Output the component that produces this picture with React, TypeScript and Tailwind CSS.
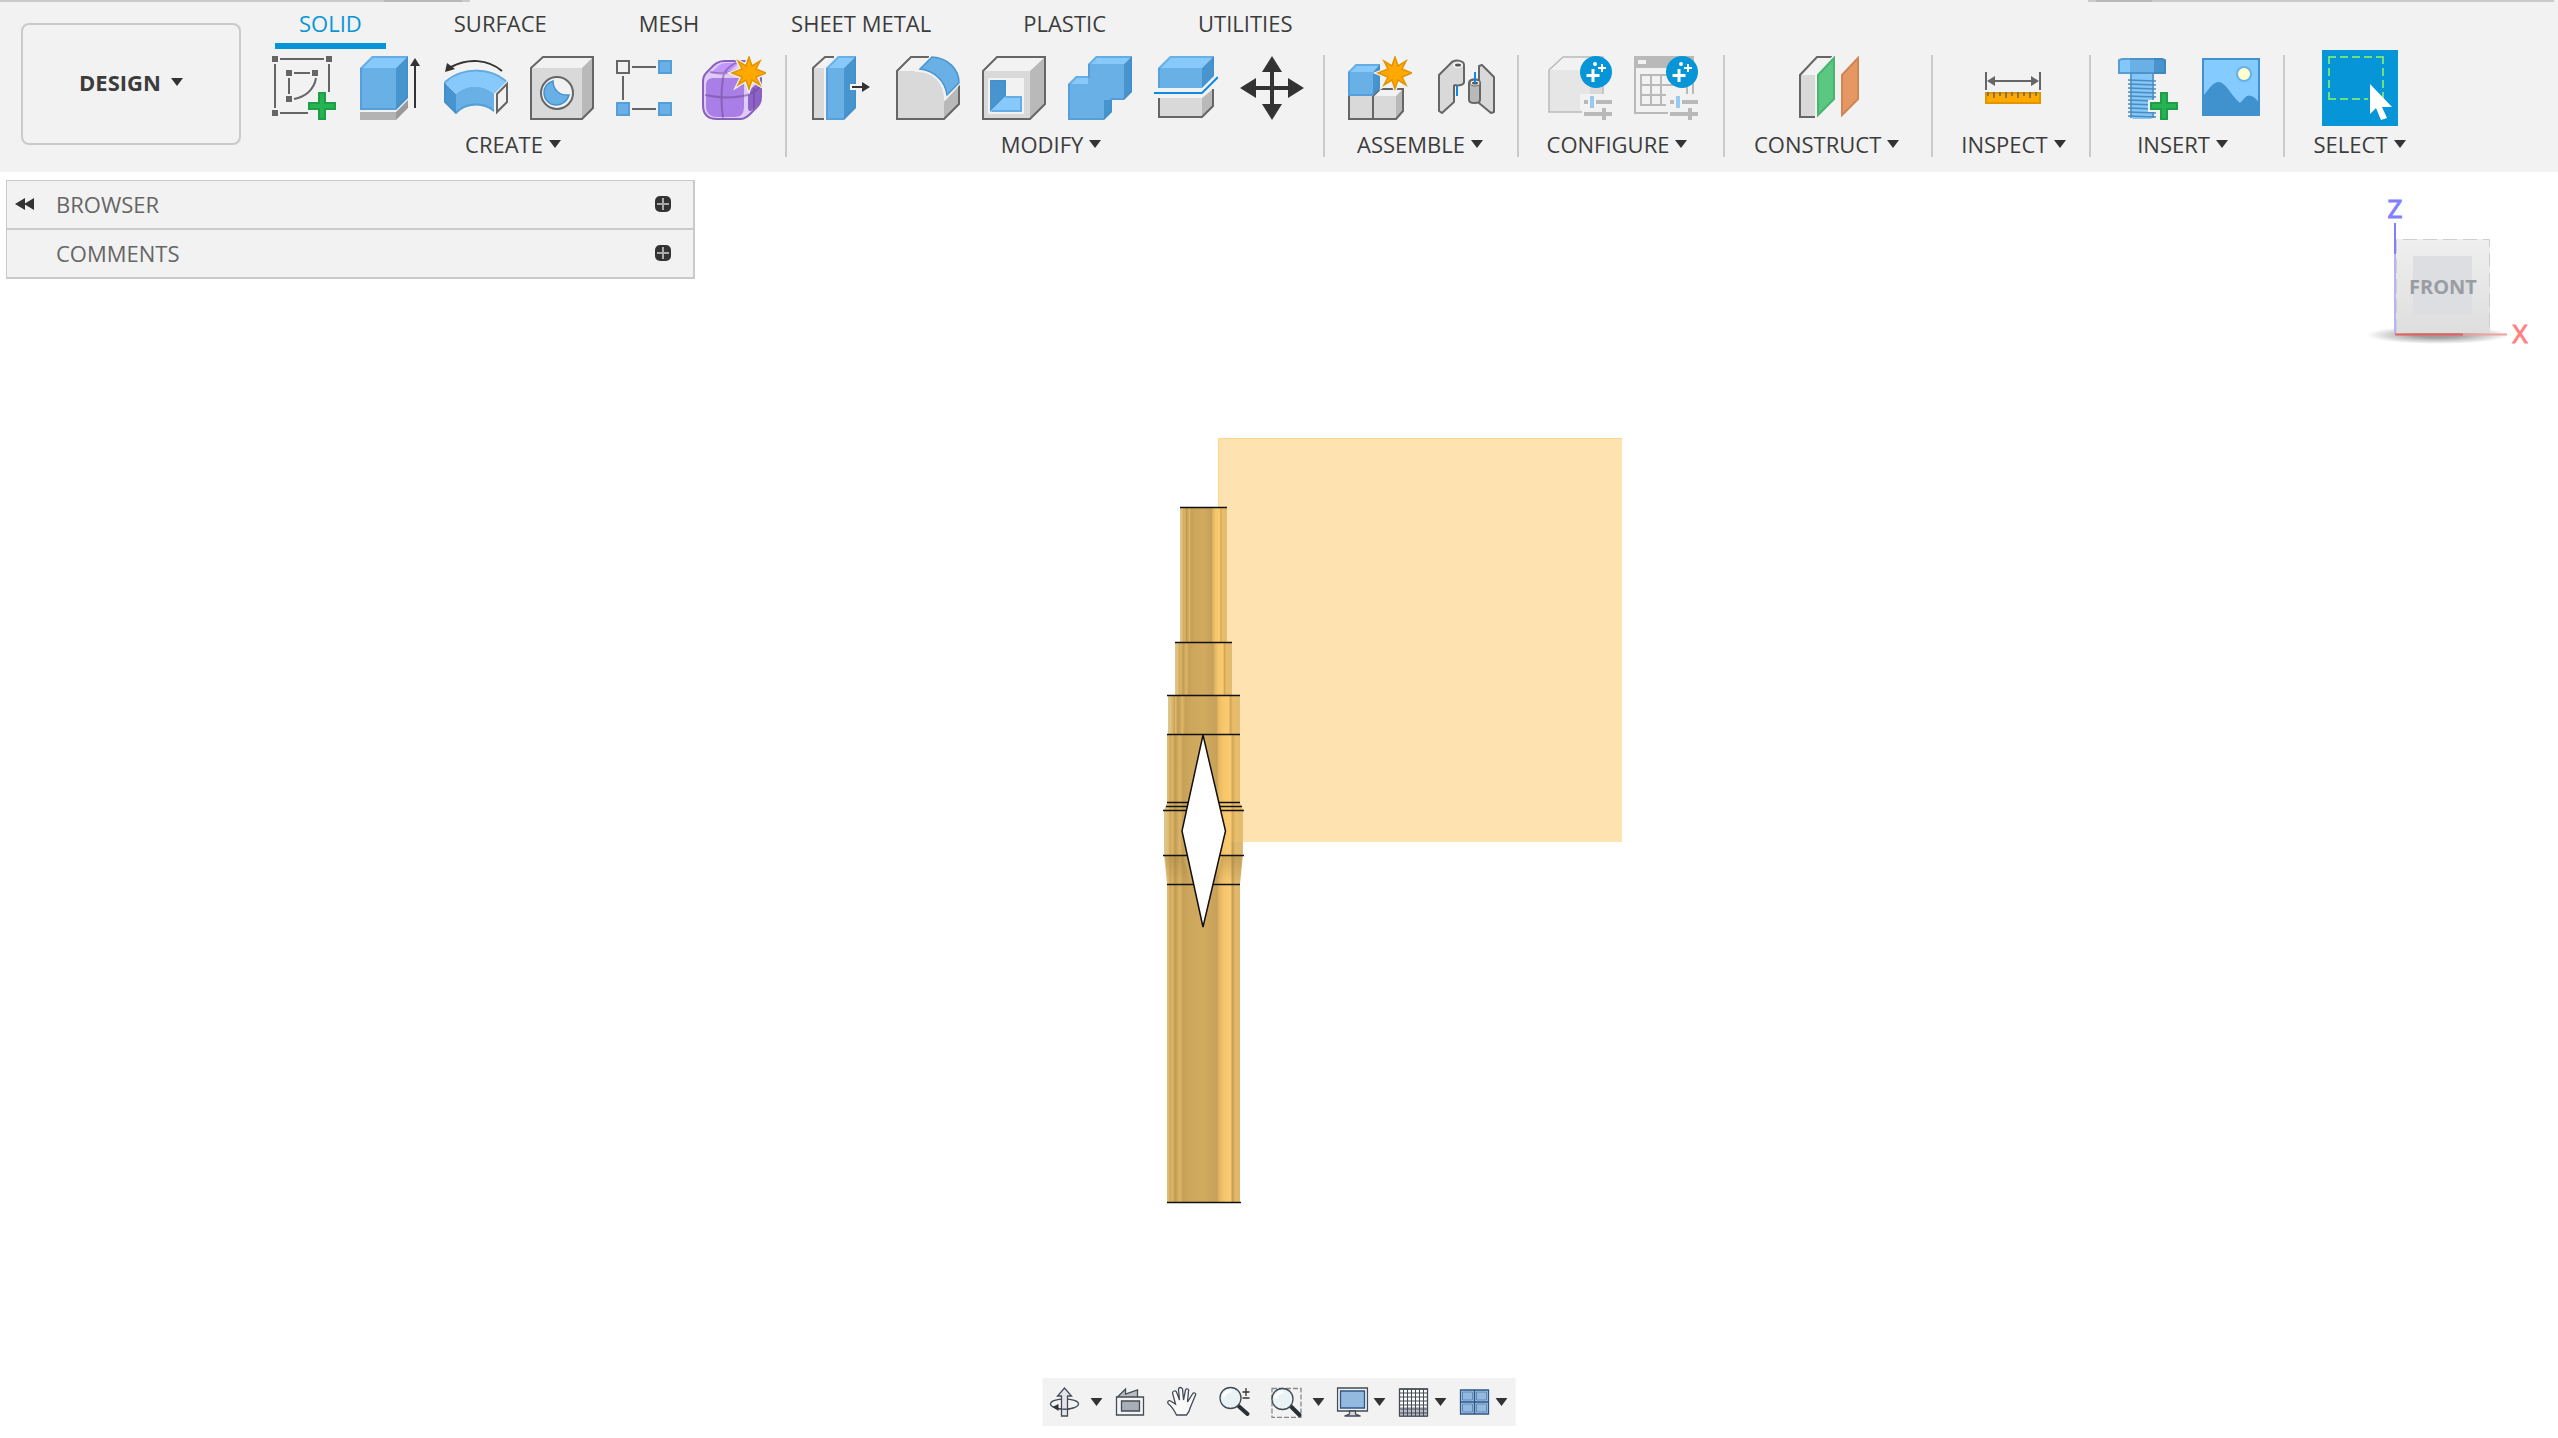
import type { ReactNode } from 'react';
import clsx from 'clsx';

// ─── Shared shapes ───────────────────────────────────────────────────────────

function Caret() {
  return (
    <svg width="12" height="8" viewBox="0 0 12 8" className="shrink-0">
      <path d="M0 0h12L6 8z" fill="#333" />
    </svg>
  );
}

function Icon({ children }: { children: ReactNode }) {
  return (
    <svg viewBox="0 0 64 64" className="size-16" fill="none">
      {children}
    </svg>
  );
}

const Plus = () => (
  <>
    <path d="M44 34h12v10h10v12H56v10H44V56H34V44h10z" fill="#f2f2f2" />
    <path d="M47 37h6v10h10v6H53v10h-6V53H37v-6h10z" fill="#27b354" stroke="#1c9f47" strokeWidth="2" />
  </>
);

const STAR = 'M47 1l3 9 8-5-4 8 10 4-10 4 4 8-8-5-3 9-3-9-8 5 4-8-10-4 10-4-4-8 8 5z';

const Star = () => (
  <>
    <path d={STAR} fill="#f2f2f2" stroke="#f2f2f2" strokeWidth="4" />
    <path d={STAR} fill="#ffa800" stroke="#e29500" strokeWidth="1.5" />
  </>
);

const ConfigBadge = () => (
  <>
    <path d="M32 38h32v26H34V54h-2z" fill="#f2f2f2" />
    <path d="M36 46h28M36 58h28M56 52v12" stroke="#b9b9b9" strokeWidth="4" />
    <path d="M44 38v16" stroke="#f2f2f2" strokeWidth="8" />
    <path d="M44 40v12" stroke="#97caf2" strokeWidth="4" />
    <circle cx="48" cy="16" r="16" fill="#0696d7" />
    <path d="M45 13v13M38.500 19.500h13" stroke="#fff" strokeWidth="3" />
    <path d="M54 8v8M50 12h8" stroke="#fff" strokeWidth="2" />
    <circle cx="47" cy="8" r="2" fill="#fff" />
  </>
);

// ─── Toolbar icons ───────────────────────────────────────────────────────────

const SketchIcon = () => (
  <Icon>
    <path d="M8 3h44M3 8v44M57 8v28M8 57h28M22 17h16M17 22v16M22 43C33 41 42 34 44 22" stroke="#666" strokeWidth="2" />
    <path d="M0 0h6v6H0zM54 0h6v6h-6zM0 54h6v6H0zM14 14h6v6h-6zM40 14h6v6h-6zM14 40h6v6h-6z" fill="#666" />
    <Plus />
  </Icon>
);

const ExtrudeIcon = () => (
  <Icon>
    <path d="M2 56h36v8H2z" fill="#b3b3b3" />
    <path d="M38 56l12-12v8L38 64z" fill="#999" />
    <path d="M2 12h36v42H2z" fill="#69b0e7" />
    <path d="M2 12L14 0h36L38 12z" fill="#87c9fb" />
    <path d="M38 12L50 0v42L38 54z" fill="#4894cf" />
    <path d="M3 12.500L14.500 1H49v40.500L37.500 53H3z" stroke="#3c8cc8" strokeOpacity=".45" strokeWidth="2" />
    <path d="M57 52V8" stroke="#333" strokeWidth="2" />
    <path d="M57 2l5 8H52z" fill="#333" />
  </Icon>
);

const RevolveIcon = () => (
  <Icon>
    <path d="M0 26l12 12v20L0 46z" fill="#4894cf" />
    <path d="M0 26C18 10 45 10 63 25L50 38c-10-10-28-10-38 0z" fill="#87c9fb" />
    <path d="M12 38c10-10 28-10 38 0v18c-10-9-28-9-38 2z" fill="#69b0e7" />
    <path d="M1 26C18 11 45 11 62 25M50 55c-10-9-28-9-38 2L1 46V26" stroke="#3c8cc8" strokeOpacity=".5" strokeWidth="2" />
    <path d="M53 38l10-10v18L53 56z" fill="#f2f2f2" stroke="#666" strokeWidth="2" />
    <path d="M58 15C44 3 24 2 7 11" stroke="#333" strokeWidth="2" />
    <path d="M1 16L3 7l8 6z" fill="#333" />
  </Icon>
);

const HoleIcon = () => (
  <Icon>
    <path d="M1 12L13 1h50L52 12z" fill="#f2f2f2" />
    <path d="M1 12h51v51H1z" fill="#d9d9d9" />
    <path d="M52 12L63 1v51L52 63z" fill="#b9b9b9" />
    <path d="M1 12L13 1h50v51L52 63H1z" stroke="#666" strokeWidth="2" />
    <circle cx="27" cy="37" r="16" fill="#f2f2f2" stroke="#666" strokeWidth="2" />
    <path d="M23 25c0 9 7 15 16 14-2 7-8 10-13 10-7 0-12-6-12-12 0-5 3-10 9-12z" fill="#69b0e7" stroke="#4894cf" strokeWidth="1.500" />
  </Icon>
);

const PatternIcon = () => (
  <Icon>
    <path d="M16 11h24M7 20v24M16 53h24" stroke="#666" strokeWidth="2" />
    <path d="M1 5h12v12H1z" fill="#f2f2f2" stroke="#666" strokeWidth="2" />
    <path d="M43 5h12v12H43zM1 47h12v12H1zM43 47h12v12H43z" fill="#69b0e7" stroke="#559fd8" strokeWidth="2" />
  </Icon>
);

const FormIcon = () => (
  <Icon>
    <path d="M1 25c0-5 2-7 6-11s8-9 15-9h18c12 0 19 8 19 18v18c0 6-2 8-6 12s-8 10-14 10H15C6 63 1 58 1 49z" fill="#e0caf8" />
    <path d="M9 17l6-6c3-3 6-4 9-4h13l-9 8c-4 3-7 2-19 2z" fill="#c097fb" />
    <path d="M4 30c0-7 4-8 8-8h24c5 0 6 3 6 8v20c0 8-3 11-10 11H15C8 61 4 57 4 50z" fill="#a97ee6" />
    <path d="M46 39c0-4 3-6 6-9l7-6v17c0 5-3 8-7 12-4 3-6 3-6-2z" fill="#8e63c9" />
    <path d="M3 39c14 3 28 3 38 1 7-1 13-5 18-10M21 62c-2-14-2-27 0-40 1-8 7-12 14-16M8 16c8 2 18 2 26-2M52 54V32" stroke="#6b4594" strokeOpacity=".5" strokeWidth="2" />
    <path d="M1 25c0-5 2-7 6-11s8-9 15-9h18c12 0 19 8 19 18v18c0 6-2 8-6 12s-8 10-14 10H15C6 63 1 58 1 49z" stroke="#8a60bf" strokeWidth="2" />
    <Star />
  </Icon>
);

const PressPullIcon = () => (
  <Icon>
    <path d="M3 13L15 1h9L14 12v51H3z" fill="#d9d9d9" />
    <path d="M3 12L15 1h9L14 12z" fill="#f2f2f2" />
    <path d="M24 1h-9L3 12v51h11" stroke="#666" strokeWidth="2" />
    <path d="M16 12h18v52H16z" fill="#69b0e7" />
    <path d="M16 12L28 0h18L34 12z" fill="#87c9fb" />
    <path d="M34 12L46 0v52L34 64z" fill="#4894cf" />
    <path d="M17 12.500L28.500 1H45v50.500L33.500 63H17z" stroke="#3c8cc8" strokeOpacity=".4" strokeWidth="2" />
    <path d="M40 31h14" stroke="#f2f2f2" strokeWidth="6" />
    <path d="M42 31h12" stroke="#333" strokeWidth="2" />
    <path d="M52 26l8 5-8 5z" fill="#333" />
  </Icon>
);

const FilletIcon = () => (
  <Icon>
    <path d="M1 15L15 1h19L22 15z" fill="#f2f2f2" />
    <path d="M1 15h22c14 1 25 12 25 28v20H1z" fill="#d9d9d9" />
    <path d="M48 44l15-15v19L48 63z" fill="#b9b9b9" />
    <path d="M33 1H15L1 15v48h47l15-15V29" stroke="#666" strokeWidth="2" />
    <path d="M23 14L36 1c16 1 27 12 27 26L50 41C49 25 38 15 23 14z" fill="#69b0e7" stroke="#f2f2f2" strokeWidth="4" />
    <path d="M24 13L36 1c16 1 27 12 27 26L51 39C49 25 39 15 24 13z" fill="#69b0e7" stroke="#4894cf" strokeWidth="1.500" />
  </Icon>
);

const ShellIcon = () => (
  <Icon>
    <path d="M1 15L15 1h48L48 15z" fill="#f2f2f2" />
    <path d="M1 15h47v48H1z" fill="#d9d9d9" />
    <path d="M48 15L63 1v47L48 63z" fill="#b9b9b9" />
    <path d="M1 15L15 1h48v47L48 63H1z" stroke="#666" strokeWidth="2" />
    <path d="M6 22h36v36H6z" fill="#f2f2f2" />
    <path d="M8 24h16v16L8 56z" fill="#4894cf" />
    <path d="M8 56l16-16h16v16z" fill="#87c9fb" />
    <path d="M9 25h14v15M23 41h16v14H10" stroke="#3c8cc8" strokeOpacity=".45" strokeWidth="2" />
  </Icon>
);

const CombineIcon = () => (
  <Icon>
    <path d="M0 28h20V8h36v36H36v20H0z" fill="#69b0e7" />
    <path d="M0 28l8-8h12v8zM20 8l8-8h36l-8 8z" fill="#87c9fb" />
    <path d="M56 8l8-8v36l-8 8zM36 44h8v12l-8 8z" fill="#4894cf" />
    <path d="M1 28.500L8.500 21H21V8.500L28.500 1H63v34.500L55.500 43H43v12.500L35.500 63H1z" stroke="#3c8cc8" strokeOpacity=".45" strokeWidth="2" />
  </Icon>
);

const SplitIcon = () => (
  <Icon>
    <path d="M4 12h44v20H4z" fill="#69b0e7" />
    <path d="M4 12L16 0h44L48 12z" fill="#87c9fb" />
    <path d="M48 12L60 0v20L48 32z" fill="#4894cf" />
    <path d="M5 32V12.500L16.500 1H59v19" stroke="#3c8cc8" strokeOpacity=".4" strokeWidth="2" />
    <path d="M0 37h48l16-16" stroke="#0d8ae5" strokeWidth="2" />
    <path d="M5 42h43v19H5z" fill="#d9d9d9" />
    <path d="M48 42l11-9v17L48 61z" fill="#b9b9b9" />
    <path d="M5 42v19h43l11-11V33" stroke="#666" strokeWidth="2" />
  </Icon>
);

const MoveIcon = () => (
  <Icon>
    <path d="M32 12v40M12 32h40" stroke="#333" strokeWidth="4" />
    <path d="M32 0l10 16H22zM32 64l10-16H22zM0 32l16-10v20zM64 32L48 22v20z" fill="#333" />
  </Icon>
);

const ComponentIcon = () => (
  <Icon>
    <path d="M1 40h24v23H1zM25 40h23v23H25z" fill="#d9d9d9" />
    <path d="M25 40l7-7h23l-7 7z" fill="#f2f2f2" />
    <path d="M48 40l7-7v22l-7 8z" fill="#b9b9b9" />
    <path d="M1 40v23h47l7-8V33H32l-7 7v23" stroke="#666" strokeWidth="2" />
    <path d="M0 16h25v24H0z" fill="#69b0e7" />
    <path d="M0 16l8-8h24l-7 8z" fill="#87c9fb" />
    <path d="M25 16l7-8v24l-7 8z" fill="#4894cf" />
    <path d="M1 16l7-7h23v22l-7 8H1z" stroke="#3c8cc8" strokeOpacity=".45" strokeWidth="2" />
    <Star />
  </Icon>
);

const JointIcon = () => (
  <Icon>
    <path d="M5 19L18 6l2 4v36L8 57l-3-2z" fill="#d9d9d9" stroke="#666" strokeWidth="2" strokeLinejoin="round" />
    <path d="M18 8v20c3 3 12 2 12-2V9c0-5-9-6-12-3z" fill="#d9d9d9" />
    <path d="M17 7c3-4 13-3 13 2v17c0 3-5 4-10 3" stroke="#666" strokeWidth="2" />
    <ellipse cx="24" cy="9" rx="5" ry="3" fill="#f2f2f2" />
    <ellipse cx="24" cy="9" rx="3" ry="1.500" fill="#555" />
    <path d="M23 30v10" stroke="#0d8ae5" strokeWidth="2" />
    <path d="M45 10l3-1 12 12v35l-3 1-12-10z" fill="#d9d9d9" stroke="#666" strokeWidth="2" strokeLinejoin="round" />
    <path d="M35 27c0-5 11-5 11 0v17c0 4-11 4-11 0z" fill="#b9b9b9" stroke="#666" strokeWidth="2" />
    <ellipse cx="41" cy="27" rx="5" ry="3" fill="#f2f2f2" stroke="#666" strokeWidth="1" />
    <ellipse cx="41" cy="27" rx="3" ry="1.500" fill="#555" />
    <path d="M41 16v11" stroke="#0d8ae5" strokeWidth="2" />
  </Icon>
);

const ConfigureIcon = () => (
  <Icon>
    <path d="M1 14h41v42H1z" fill="#e6e6e6" />
    <path d="M42 14L55 1v42L42 56z" fill="#d9d9d9" />
    <path d="M1 14L15 1h40v42L42 56H1z" stroke="#bbb" strokeWidth="1.500" />
    <ConfigBadge />
  </Icon>
);

const ConfigTableIcon = () => (
  <Icon>
    <path d="M0 0h60v12H0z" fill="#b9b9b9" />
    <path d="M4 4h8v4H4z" fill="#f2f2f2" />
    <path d="M1 12v45h36M59 12v30M53 30v12M7 19h46v30H7zM17 19v30M27 19v30M7 29h46M7 39h46" stroke="#b9b9b9" strokeWidth="2" />
    <ConfigBadge />
  </Icon>
);

const PlaneIcon = () => (
  <Icon>
    <path d="M5 19L22 1h15L20 19z" fill="#f2f2f2" />
    <path d="M5 19h15v42H5z" fill="#d9d9d9" />
    <path d="M37 1H22L5 19v42h15" stroke="#666" strokeWidth="2" />
    <path d="M23 19L39 2v41L23 59z" fill="#5ac880" stroke="#f2f2f2" strokeWidth="5" />
    <path d="M23 19L39 2v41L23 59z" fill="#5ac880" stroke="#48b46e" strokeWidth="2" />
    <path d="M47 19L63 2v41L47 59z" fill="#e59864" stroke="#d08552" strokeWidth="2" />
  </Icon>
);

const MeasureIcon = () => (
  <Icon>
    <path d="M5 16v18M59 16v18M10 25h44" stroke="#666" strokeWidth="2" />
    <path d="M6 25l8-5v10zM58 25l-8-5v10z" fill="#666" />
    <path d="M5 37h54v10H5z" fill="#ffa800" stroke="#e09600" strokeWidth="2" />
    <path d="M7 36v4M13 36v6M19 36v4M25 36v6M31 36v4M37 36v6M43 36v4M49 36v6M55 36v4" stroke="#666" strokeWidth="1.500" />
  </Icon>
);

const FastenerIcon = () => (
  <Icon>
    <path d="M16 18h24v42l-3 3H19l-3-3z" fill="#84c7fa" />
    <path d="M17 18v44M39 18v44" stroke="#5a9dcf" strokeWidth="2" />
    <path d="M4 4l4-2h8v16H4z" fill="#84c7fa" />
    <path d="M16 2h24v16H16z" fill="#69b0e7" />
    <path d="M40 2h8l4 2v14H40z" fill="#4894cf" />
    <path d="M5 17V4l3-1h40l3 1v13z" stroke="#3c7fb3" strokeOpacity=".6" strokeWidth="2" />
    <path d="M14 24l28 1M14 28l28 1M14 32l28 1M14 36l28 1M14 40l28 1M14 44l28 1M14 48l28 1M14 52l28 1M14 56l28 1M14 60l28 1" stroke="#4c8bbd" strokeWidth="1.500" />
    <Plus />
  </Icon>
);

const CanvasIcon = () => (
  <Icon>
    <path d="M2 2h58v58H2z" fill="#84cbff" />
    <path d="M2 42C12 28 16 24 22 27c6 4 10 13 18 20 5-5 7-9 11-7 4 1 6 4 9 8v12H2z" fill="#3f92cd" />
    <path d="M3 3h56v56H3z" stroke="#3f92cd" strokeWidth="2" />
    <circle cx="44" cy="18" r="7" fill="#ffffcd" stroke="#69b0e7" strokeWidth="2" />
  </Icon>
);

const SelectIcon = () => (
  <Icon>
    <path d="M1 8V1h7M12 1h8M24 1h8M36 1h8M48 1h7v7M55 12v8M55 24v8M55 36v7M40 43h-4M32 43h-8M20 43h-8M8 43H1v-7M1 32v-8M1 20v-8" stroke="#6fe07f" strokeWidth="2" />
    <path d="M42 28v30l6-6 5 12 6-2-5-11h10z" fill="#fff" />
  </Icon>
);

// ─── Ribbon ──────────────────────────────────────────────────────────────────

const TABS = ['SOLID', 'SURFACE', 'MESH', 'SHEET METAL', 'PLASTIC', 'UTILITIES'];

type Tool = { name: string; icon: ReactNode; active?: boolean };

type Group = { label: string; pad: string; labelPad?: string; tools: Tool[] };

const GROUPS: Group[] = [
  {
    label: 'CREATE',
    pad: 'pr-[13px]',
    labelPad: 'pr-3',
    tools: [
      { name: 'Create Sketch', icon: <SketchIcon /> },
      { name: 'Extrude', icon: <ExtrudeIcon /> },
      { name: 'Revolve', icon: <RevolveIcon /> },
      { name: 'Hole', icon: <HoleIcon /> },
      { name: 'Rectangular Pattern', icon: <PatternIcon /> },
      { name: 'Create Form', icon: <FormIcon /> },
    ],
  },
  {
    label: 'MODIFY',
    pad: 'pl-[17px] pr-[13px]',
    labelPad: 'pr-3',
    tools: [
      { name: 'Press Pull', icon: <PressPullIcon /> },
      { name: 'Fillet', icon: <FilletIcon /> },
      { name: 'Shell', icon: <ShellIcon /> },
      { name: 'Combine', icon: <CombineIcon /> },
      { name: 'Split Body', icon: <SplitIcon /> },
      { name: 'Move/Copy', icon: <MoveIcon /> },
    ],
  },
  {
    label: 'ASSEMBLE',
    pad: 'pl-[17px] pr-[13px]',
    labelPad: 'pr-[6px]',
    tools: [
      { name: 'New Component', icon: <ComponentIcon /> },
      { name: 'Joint', icon: <JointIcon /> },
    ],
  },
  {
    label: 'CONFIGURE',
    pad: 'pl-[23px] pr-[19px]',
    labelPad: 'pr-3',
    tools: [
      { name: 'Create Configuration', icon: <ConfigureIcon /> },
      { name: 'Configuration Table', icon: <ConfigTableIcon /> },
    ],
  },
  { label: 'CONSTRUCT', pad: 'pl-[29px] pr-8', tools: [{ name: 'Offset Plane', icon: <PlaneIcon /> }] },
  { label: 'INSPECT', pad: 'pl-7 pr-[23px]', tools: [{ name: 'Measure', icon: <MeasureIcon /> }] },
  {
    label: 'INSERT',
    pad: 'pl-[17px] pr-[13px]',
    labelPad: 'pr-3',
    tools: [
      { name: 'Insert Fastener', icon: <FastenerIcon /> },
      { name: 'Canvas', icon: <CanvasIcon /> },
    ],
  },
  { label: 'SELECT', pad: 'pl-[29px] pr-7', tools: [{ name: 'Select', icon: <SelectIcon />, active: true }] },
];

function ToolGroup({ label, pad, labelPad, tools }: Group) {
  return (
    <div className={clsx('flex flex-col items-center', pad)}>
      <div className="flex gap-[10px]">
        {tools.map((tool) => (
          <button
            key={tool.name}
            aria-label={tool.name}
            className={clsx('size-[76px] p-[6px]', tool.active && 'bg-[#0696d7]')}
          >
            {tool.icon}
          </button>
        ))}
      </div>
      <button className={clsx('mt-[6px] flex items-center gap-[6px]', labelPad)}>
        {label}
        <Caret />
      </button>
    </div>
  );
}

function Ribbon() {
  return (
    <header className="bg-[#f2f2f2] text-[22px] leading-6 text-[#3c3c3c]">
      <div className="flex h-[2px] justify-between pr-1">
        <div className="flex w-[470px] justify-end bg-[#cacaca] pr-2">
          <div className="w-[78px] bg-[#b9b9b9]" />
        </div>
        <div className="flex w-[466px] bg-[#cacaca] pl-2">
          <div className="w-14 bg-[#b9b9b9]" />
        </div>
      </div>
      <div className="flex items-start pl-[21px]">
        <button className="mt-[21px] flex h-[122px] w-[220px] items-center justify-center gap-[10px] rounded-lg border-2 border-[#cacaca] pb-1 font-bold">
          DESIGN
          <Caret />
        </button>
        <div className="ml-[25px] pt-[9px] pb-[15px]">
          <nav className="mb-px ml-[9px] flex gap-11">
            {TABS.map((tab, i) => (
              <button
                key={tab}
                className={clsx(
                  'border-b-[6px] px-6 pb-2',
                  i === 0 ? 'border-[#0696d7] text-[#0696d7]' : 'border-transparent',
                )}
              >
                {tab}
              </button>
            ))}
          </nav>
          <div className="flex">
            {GROUPS.map((group, i) => (
              <div key={group.label} className="flex">
                {i > 0 && <div className="mt-[5px] h-[102px] w-[2px] bg-[#cacaca]" />}
                <ToolGroup {...group} />
              </div>
            ))}
          </div>
        </div>
      </div>
    </header>
  );
}

// ─── Side panels ─────────────────────────────────────────────────────────────

function PanelRow({ title, collapsible }: { title: string; collapsible?: boolean }) {
  return (
    <div className="flex h-[49px] items-center border-b-2 border-[#cacaca] pr-[22px] pb-[2px] pl-2">
      <button aria-label="Collapse panel" className="h-3 w-5">
        {collapsible && (
          <svg viewBox="0 0 20 12" className="h-3 w-5">
            <path d="M0 6L10 0v12zM9 6l10-6v12z" fill="#333" />
          </svg>
        )}
      </button>
      <h2 className="ml-[21px] flex-1">{title}</h2>
      <button aria-label={`Add to ${title}`}>
        <svg viewBox="0 0 16 16" className="size-4">
          <rect width="16" height="16" rx="5" fill="#333" />
          <path d="M8 2v12M2 8h12" stroke="#aaa" strokeWidth="2" />
        </svg>
      </button>
    </div>
  );
}

// ─── Canvas ──────────────────────────────────────────────────────────────────

function Model() {
  return (
    <svg
      width="470"
      height="780"
      viewBox="1160 430 470 780"
      className="absolute top-[258px] left-1/2 -ml-[119px]"
      fill="none"
    >
      <defs>
        <linearGradient id="brass">
          <stop offset="0" stopColor="#d9c89b" />
          <stop offset=".05" stopColor="#e3bd6e" />
          <stop offset=".09" stopColor="#c9a55c" />
          <stop offset=".1" stopColor="#e3bb69" />
          <stop offset=".14" stopColor="#bd9a55" />
          <stop offset=".2" stopColor="#dfb566" />
          <stop offset=".24" stopColor="#c6a057" />
          <stop offset=".32" stopColor="#cda75c" />
          <stop offset=".5" stopColor="#d2aa5f" />
          <stop offset=".67" stopColor="#c7a15a" />
          <stop offset=".7" stopColor="#e2b663" />
          <stop offset=".76" stopColor="#f6c66c" />
          <stop offset=".84" stopColor="#fbcb74" />
          <stop offset=".87" stopColor="#c09c54" />
          <stop offset=".9" stopColor="#e2ba6b" />
          <stop offset=".96" stopColor="#deb769" />
          <stop offset="1" stopColor="#d3bc88" />
        </linearGradient>
        <linearGradient id="taper" x1="0" y1="0" x2="0" y2="1">
          <stop offset="0" stopColor="#8f7136" stopOpacity=".35" />
          <stop offset="1" stopColor="#8f7136" stopOpacity="0" />
        </linearGradient>
      </defs>
      <path d="M1218 438h404v404h-404z" fill="#fee2b0" />
      <path d="M1218.500 842V438.500H1622" stroke="#ffd68c" />

      <g fill="url(#brass)">
        <path d="M1180 507h47v135h-47z" />
        <path d="M1175 642h57v53h-57z" />
        <path d="M1168 695h72v39h-72z" />
        <path d="M1167 734h73v69l3 7v45l-3 29v318h-73V884l-3-29v-45l3-7z" />
      </g>
      <path d="M1165 856h18l7 28h-22zM1242 856h-20l-7 28h25z" fill="url(#taper)" />
      <path d="M1218 507h9v135h5v53h8v108l3 7v32h-25z" fill="#ffc865" fillOpacity=".25" />

      <path
        d="M1180 507.500h47M1175 642.500h57M1167 695.500h73M1167 734.500h73M1167 802.500h73M1166 806.500h76M1163 810.500h81M1163 855.500h81M1167 884.500h73M1167 1202.500h74"
        stroke="#111"
        strokeWidth="1.500"
      />
      <path d="M1203 735l22.500 96-22.500 96-21-96z" fill="#fff" stroke="#111" strokeWidth="1.500" />
    </svg>
  );
}

function ViewCube() {
  return (
    <svg
      width="190"
      height="160"
      viewBox="2360 190 190 160"
      className="absolute top-[18px] right-2"
      fontFamily="'Open Sans', sans-serif"
    >
      <defs>
        <linearGradient id="cube" x1="0" y1="0" x2="0" y2="1">
          <stop offset="0" stopColor="#efefef" />
          <stop offset="1" stopColor="#dedede" />
        </linearGradient>
        <radialGradient id="shade">
          <stop offset=".3" stopColor="#777" stopOpacity=".7" />
          <stop offset="1" stopColor="#777" stopOpacity="0" />
        </radialGradient>
      </defs>
      <ellipse cx="2438" cy="335" rx="72" ry="9" fill="url(#shade)" />
      <path d="M2396 239h94v94h-94z" fill="url(#cube)" />
      <path d="M2396.500 333V239.500h93V333" fill="none" stroke="#cfcfcf" strokeDasharray="14 6" />
      <path d="M2413 256h59v59h-59z" fill="#dcdee2" />
      <path d="M2395 223v31" stroke="#8080ff" strokeWidth="2" />
      <path d="M2395 254v80" stroke="#b5b5f7" strokeWidth="2" />
      <path d="M2395 334.500h68" stroke="#e85f5f" strokeWidth="2" />
      <path d="M2463 334.500h44" stroke="#eda0a0" strokeWidth="2" />
      <text x="2443" y="294" textAnchor="middle" fontSize="20" fontWeight="700" fill="#999da2">
        FRONT
      </text>
      <text x="2395" y="218" textAnchor="middle" fontSize="26" fill="#8080ff" stroke="#8080ff">
        Z
      </text>
      <text x="2520" y="343" textAnchor="middle" fontSize="26" fill="#ff8080" stroke="#ff8080">
        X
      </text>
    </svg>
  );
}

// ─── Navigation bar ──────────────────────────────────────────────────────────

function NavIcon({ label, className, children }: { label: string; className?: string; children: ReactNode }) {
  return (
    <button aria-label={label} className={clsx('size-8', className)}>
      <svg viewBox="0 0 32 32" className="size-8" fill="none" stroke="#444b55" strokeWidth="1.300">
        {children}
      </svg>
    </button>
  );
}

function NavCaret({ className }: { className: string }) {
  return (
    <button aria-label="More options" className={className}>
      <Caret />
    </button>
  );
}

function NavBar() {
  return (
    <div className="absolute bottom-3 left-1/2 flex h-12 -translate-x-1/2 items-center bg-[#f2f2f2] pr-2 pl-[6px]">
      <NavIcon label="Orbit">
        <ellipse cx="16" cy="18" rx="14" ry="5" />
        <path d="M13 30V10h-4l7-8 7 8h-4v20z" fill="#e3e5ea" />
        <path d="M8 22c5 1.500 12 1.500 17 0" />
        <path d="M4 21l6-3v7z" fill="#333" stroke="none" />
      </NavIcon>
      <NavCaret className="ml-[10px]" />
      <NavIcon label="Look At" className="ml-3">
        <path d="M3 11l8-8v5l12-4v7" fill="#b9bcc2" />
        <path d="M2 11h27v18H2z" fill="#f4f4f6" />
        <path d="M7 15h18v10H7z" fill="#a9adb8" />
      </NavIcon>
      <NavIcon label="Pan" className="ml-5">
        <path
          d="M10 29c-2-4-4-8-8-11-2-2 0-4 2-3l5 3L6 7c0-2 3-3 4-1l3 8-1-11c0-2 3-2 4 0l1 11 2-10c1-2 4-1 3 1l-1 11 5-8c1-2 4-1 3 1l-5 12c-1 4-2 6-4 8z"
          fill="#fafafa"
        />
      </NavIcon>
      <NavIcon label="Zoom" className="ml-5">
        <path d="M20 20l9 8" stroke="#2b2f36" strokeWidth="4" strokeLinecap="round" />
        <circle cx="12" cy="12" r="10.500" fill="#e9f3f5" />
        <path d="M5 11c1-4 4-6 8-6" stroke="#fff" strokeWidth="3" />
        <path d="M24 6h7M27.500 2v8M24 12h7" stroke="#333" />
      </NavIcon>
      <NavIcon label="Fit" className="ml-5">
        <path d="M1.500 2.500h29v29h-29z" stroke="#888" strokeDasharray="5 2" />
        <path d="M20 20l9 9" stroke="#2b2f36" strokeWidth="4" strokeLinecap="round" />
        <circle cx="12" cy="13" r="10.500" fill="#e9f3f5" />
        <path d="M5 12c1-4 4-6 8-6" stroke="#fff" strokeWidth="3" />
      </NavIcon>
      <NavCaret className="ml-[10px]" />
      <NavIcon label="Display Settings" className="ml-3">
        <path d="M1 2h30v23H1z" fill="#f1f1f3" />
        <path d="M4 5h24v17H4z" fill="#94b9df" stroke="#2f5686" />
        <path d="M13 25h6v3l5 2H8l5-2z" fill="#d5d8de" />
      </NavIcon>
      <NavCaret className="ml-[5px]" />
      <NavIcon label="Grid and Snaps" className="ml-3">
        <path d="M2 3h28v27H2z" fill="#fff" />
        <path d="M2 21h28v9H2z" fill="#b9bcc6" stroke="none" />
        <path d="M2 3h28v27H2zM6 3v27M10 3v27M14 3v27M18 3v27M22 3v27M26 3v27M2 7h28M2 11h28M2 15h28M2 19h28M2 23h28M2 27h28" strokeWidth="1" />
      </NavIcon>
      <NavCaret className="ml-[5px]" />
      <NavIcon label="Viewports" className="ml-3">
        <path d="M2 4h28v24H2z" fill="#a9c7e8" stroke="#2f5686" />
        <path d="M4 6h10v8H4zM18 6h10v8H18zM4 18h10v8H4zM18 18h10v8H18z" fill="#94b9df" stroke="#5f89b8" strokeWidth="1" />
        <path d="M16 4v24M2 16h28" stroke="#2f5686" strokeWidth="1.500" />
      </NavIcon>
      <NavCaret className="ml-[5px]" />
    </div>
  );
}

export default function App() {
  return (
    <div className="flex min-h-screen flex-col bg-white font-['Open_Sans','Noto_Sans',sans-serif]">
      <Ribbon />
      <main className="relative flex-1 overflow-hidden pt-2 pl-[6px]">
        <Model />
        <aside className="w-[689px] border border-r-2 border-b-0 border-[#cacaca] bg-[#f2f2f2] text-[22px] leading-6 text-[#666]">
          <PanelRow title="BROWSER" collapsible />
          <PanelRow title="COMMENTS" />
        </aside>
        <ViewCube />
        <NavBar />
      </main>
    </div>
  );
}
